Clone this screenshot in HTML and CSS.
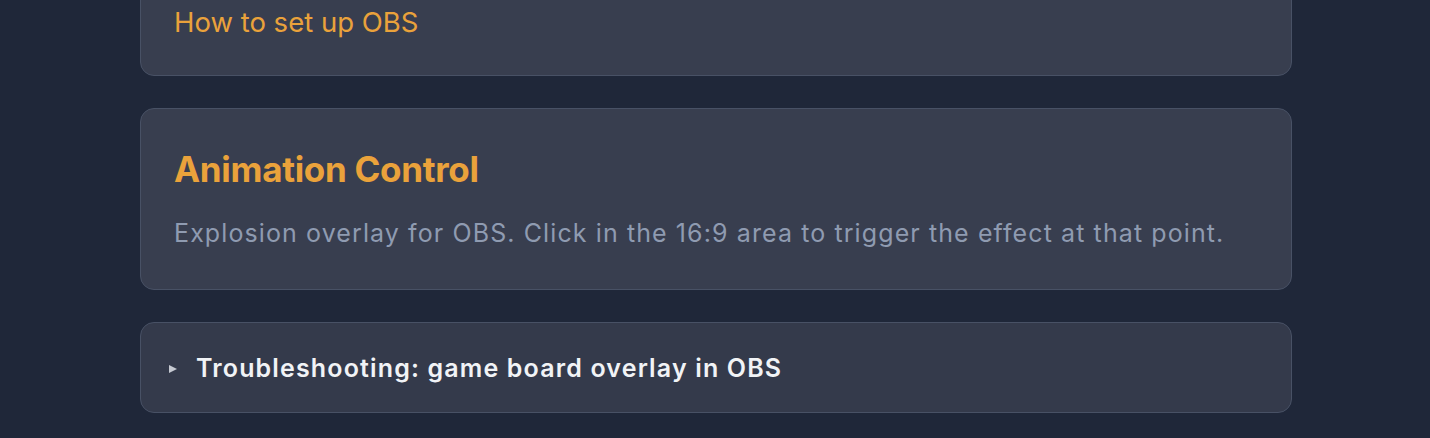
FILE: index.html
```html
<!DOCTYPE html>
<html lang="en">
<head>
<meta charset="utf-8">
<title>Animation Control</title>
<link rel="stylesheet" href="styles.css">
</head>
<body>
<main class="page">
  <section class="card card-help">
    <a class="help-link" href="#">How to set up OBS</a>
  </section>
  <section class="card card-intro">
    <h2 class="card-title">Animation Control</h2>
    <p class="card-text">Explosion overlay for OBS. Click in the 16:9 area to trigger the effect at that point.</p>
  </section>
  <details class="card card-details">
    <summary class="details-summary"><span class="marker"></span>Troubleshooting: game board overlay in OBS</summary>
  </details>
</main>
</body>
</html>
```

FILE: styles.css
```css
* { box-sizing: border-box; }
html, body {
  margin: 0;
  padding: 0;
  background: #1f2739;
  height: 100%;
  overflow: hidden;
}
body {
  font-family: Inter, "Noto Sans", sans-serif;
  color: #f1f3f6;
}
.page {
  width: 1152px;
  margin: -33px 0 0 140px;
  display: flex;
  flex-direction: column;
  gap: 32px;
}
.card {
  background: #383e4f;
  border: 1.5px solid #485165;
  border-radius: 14px;
  padding: 39px 33px 38px;
}
.card-help {
  padding-top: 34px;
  padding-bottom: 33px;
}
.help-link {
  display: block;
  color: #eaa23b;
  text-decoration: none;
  font-size: 27.5px;
  line-height: 40px;
}
.card-title {
  margin: 0;
  color: #eaa23b;
  font-size: 35px;
  font-weight: 700;
  line-height: 42px;
  letter-spacing: -0.3px;
}
.card-text {
  margin: 25px 0 0;
  color: #8f9bb1;
  font-size: 25px;
  line-height: 36px;
  letter-spacing: 1.1px;
}
.card-details {
  background: #343a4b;
  padding: 0 28px;
}
.details-summary {
  list-style: none;
  display: flex;
  align-items: center;
  height: 89px;
  font-size: 25px;
  font-weight: 600;
  letter-spacing: 1.15px;
  color: #f1f3f6;
  cursor: pointer;
}
.details-summary::-webkit-details-marker { display: none; }
.marker {
  flex: none;
  width: 0;
  height: 0;
  border-left: 8px solid #c6cad2;
  border-top: 4.5px solid transparent;
  border-bottom: 4.5px solid transparent;
  margin-right: 19px;
  margin-top: 2px;
}
```
